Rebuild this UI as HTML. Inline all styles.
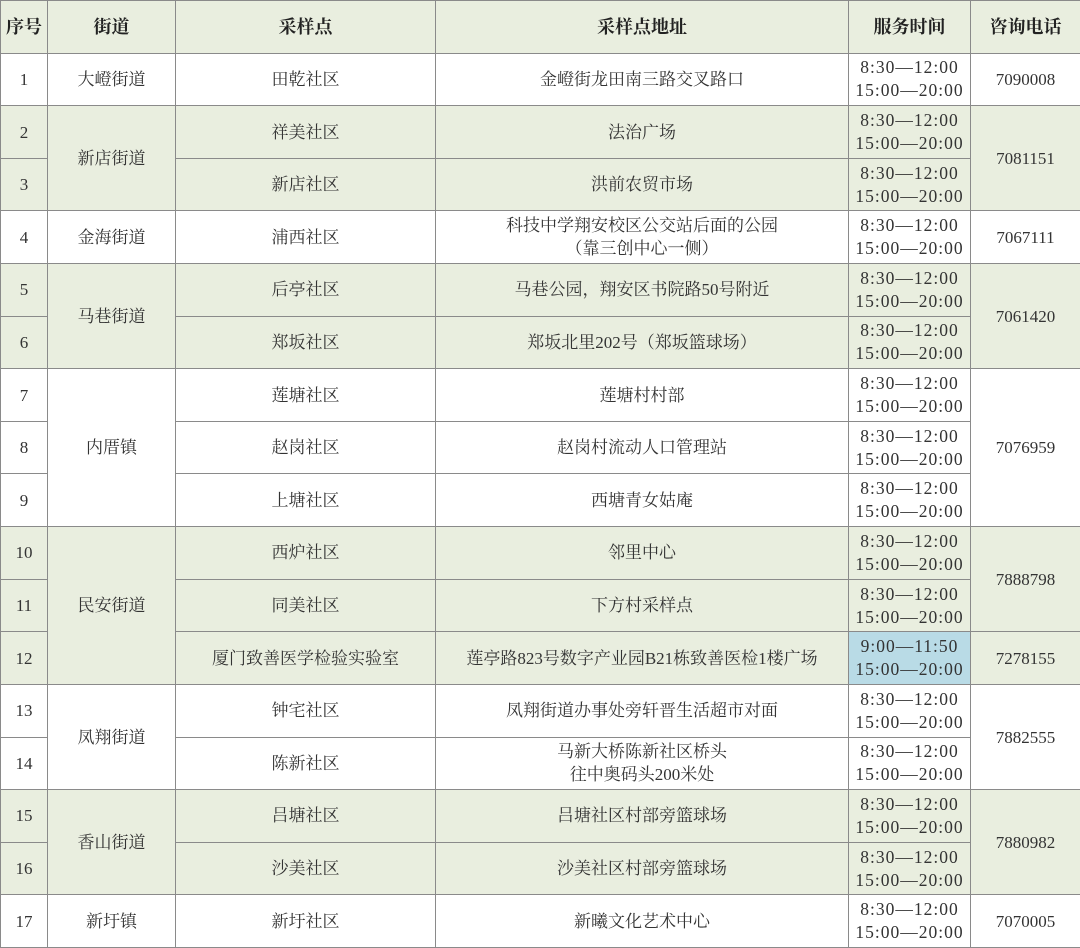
<!DOCTYPE html>
<html><head><meta charset="utf-8"><style>
html,body{margin:0;padding:0;background:#fff;overflow:hidden;}
table{border-collapse:collapse;width:1080px;height:948px;table-layout:fixed;font-family:"Liberation Serif","Noto Serif CJK SC",serif;font-size:17px;color:#333;}
td,th{border:1px solid #8a8a8a;text-align:center;vertical-align:middle;padding:0;height:48px;line-height:23px;overflow:hidden;}
th{font-weight:bold;font-family:"Noto Serif CJK SC",serif;font-size:18px;color:#222;background:#e9eedf;}
.g td{background:#e9eedf;}
.t{letter-spacing:1px;font-size:17.5px;}
.b{background:#b9dbe6 !important;}
</style></head><body>
<table>
<colgroup><col style="width:47px"><col style="width:128px"><col style="width:260px"><col style="width:413px"><col style="width:122px"><col style="width:110px"></colgroup>
<tr><th>序号</th><th>街道</th><th>采样点</th><th>采样点地址</th><th>服务时间</th><th>咨询电话</th></tr>
<tr><td>1</td><td>大嶝街道</td><td>田乾社区</td><td>金嶝街龙田南三路交叉路口</td><td class="t">8:30—12:00<br>15:00—20:00</td><td>7090008</td></tr>
<tr class="g"><td>2</td><td rowspan="2">新店街道</td><td>祥美社区</td><td>法治广场</td><td class="t">8:30—12:00<br>15:00—20:00</td><td rowspan="2">7081151</td></tr>
<tr class="g"><td>3</td><td>新店社区</td><td>洪前农贸市场</td><td class="t">8:30—12:00<br>15:00—20:00</td></tr>
<tr><td>4</td><td>金海街道</td><td>浦西社区</td><td>科技中学翔安校区公交站后面的公园<br>（靠三创中心一侧）</td><td class="t">8:30—12:00<br>15:00—20:00</td><td>7067111</td></tr>
<tr class="g"><td>5</td><td rowspan="2">马巷街道</td><td>后亭社区</td><td>马巷公园，翔安区书院路50号附近</td><td class="t">8:30—12:00<br>15:00—20:00</td><td rowspan="2">7061420</td></tr>
<tr class="g"><td>6</td><td>郑坂社区</td><td>郑坂北里202号（郑坂篮球场）</td><td class="t">8:30—12:00<br>15:00—20:00</td></tr>
<tr><td>7</td><td rowspan="3">内厝镇</td><td>莲塘社区</td><td>莲塘村村部</td><td class="t">8:30—12:00<br>15:00—20:00</td><td rowspan="3">7076959</td></tr>
<tr><td>8</td><td>赵岗社区</td><td>赵岗村流动人口管理站</td><td class="t">8:30—12:00<br>15:00—20:00</td></tr>
<tr><td>9</td><td>上塘社区</td><td>西塘青女姑庵</td><td class="t">8:30—12:00<br>15:00—20:00</td></tr>
<tr class="g"><td>10</td><td rowspan="3">民安街道</td><td>西炉社区</td><td>邻里中心</td><td class="t">8:30—12:00<br>15:00—20:00</td><td rowspan="2">7888798</td></tr>
<tr class="g"><td>11</td><td>同美社区</td><td>下方村采样点</td><td class="t">8:30—12:00<br>15:00—20:00</td></tr>
<tr class="g"><td>12</td><td>厦门致善医学检验实验室</td><td>莲亭路823号数字产业园B21栋致善医检1楼广场</td><td class="t b">9:00—11:50<br>15:00—20:00</td><td>7278155</td></tr>
<tr><td>13</td><td rowspan="2">凤翔街道</td><td>钟宅社区</td><td>凤翔街道办事处旁轩晋生活超市对面</td><td class="t">8:30—12:00<br>15:00—20:00</td><td rowspan="2">7882555</td></tr>
<tr><td>14</td><td>陈新社区</td><td>马新大桥陈新社区桥头<br>往中奥码头200米处</td><td class="t">8:30—12:00<br>15:00—20:00</td></tr>
<tr class="g"><td>15</td><td rowspan="2">香山街道</td><td>吕塘社区</td><td>吕塘社区村部旁篮球场</td><td class="t">8:30—12:00<br>15:00—20:00</td><td rowspan="2">7880982</td></tr>
<tr class="g"><td>16</td><td>沙美社区</td><td>沙美社区村部旁篮球场</td><td class="t">8:30—12:00<br>15:00—20:00</td></tr>
<tr><td>17</td><td>新圩镇</td><td>新圩社区</td><td>新曦文化艺术中心</td><td class="t">8:30—12:00<br>15:00—20:00</td><td>7070005</td></tr>
</table>
</body></html>
